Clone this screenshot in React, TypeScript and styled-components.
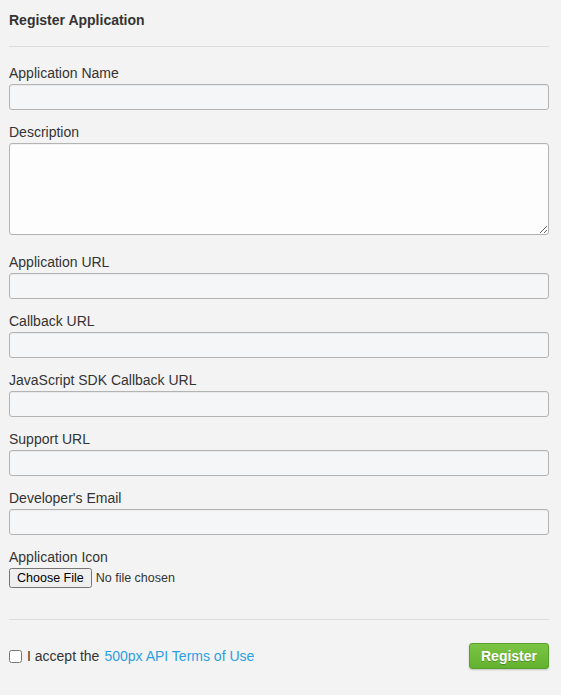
import styled, { createGlobalStyle } from 'styled-components';

const GlobalStyle = createGlobalStyle`
    html, body {
        margin: 0;
        padding: 0;
        background: #f3f3f3;
    }
    body {
        font-family: "Liberation Sans", Arial, sans-serif;
        color: #333333;
    }
`

const fields = [
    'Application URL',
    'Callback URL',
    'JavaScript SDK Callback URL',
    'Support URL',
    "Developer's Email",
]

export default function App() {
    return (
        <Page>
            <GlobalStyle />
            <Title>Register Application</Title>
            <Divider />
            <Form onSubmit={e => e.preventDefault()}>
                <Field>
                    <Label>Application Name</Label>
                    <Input />
                </Field>
                <Field $gap={18}>
                    <Label>Description</Label>
                    <TextArea />
                </Field>
                {fields.map(name => (
                    <Field key={name}>
                        <Label>{name}</Label>
                        <Input />
                    </Field>
                ))}
                <Field>
                    <Label>Application Icon</Label>
                    <FileInput type="file" />
                </Field>
                <Divider />
                <Footer>
                    <Accept>
                        <Check type="checkbox" />
                        I accept the <TermsLink href="#">500px API Terms of Use</TermsLink>
                    </Accept>
                    <RegisterBtn type="submit">Register</RegisterBtn>
                </Footer>
            </Form>
        </Page>
    )
}

const Page = styled.div`
    width: 540px;
    padding: 11px 9px 20px;
`
const Title = styled.h3`
    margin: 0;
    font-size: 14px;
    line-height: 18px;
    font-weight: bold;
    color: #333333;
`
const Divider = styled.hr`
    border: 0;
    border-top: 1px solid #dcdcdc;
    margin: 17px 0 0;
    height: 0;
`
const Form = styled.form`
    display: flex;
    flex-direction: column;
    padding-top: 17px;
`
const Field = styled.div<{ $gap?: number }>`
    display: flex;
    flex-direction: column;
    align-items: flex-start;
    margin-bottom: ${p => p.$gap ?? 13}px;
`
const Label = styled.label`
    font-size: 14px;
    line-height: 18px;
    margin-bottom: 2px;
    color: #333333;
`
const Input = styled.input`
    box-sizing: border-box;
    width: 540px;
    height: 26px;
    margin: 0;
    background: #f5f6f8;
    border: 1px solid #b3b3b3;
    border-radius: 3px;
    box-shadow: inset 0 1px 1px rgba(0, 0, 0, 0.05);
    outline: none;
`
const TextArea = styled.textarea`
    box-sizing: border-box;
    width: 540px;
    height: 92px;
    margin: 0;
    background: #fdfdfd;
    border: 1px solid #b3b3b3;
    border-radius: 3px;
    box-shadow: inset 0 1px 1px rgba(0, 0, 0, 0.05);
    outline: none;
    resize: vertical;
`
const FileInput = styled.input`
    margin: 0;
    font-family: "Liberation Sans", Arial, sans-serif;
    font-size: 12.5px;
    color: #333333;
    height: 21px;
`
const Footer = styled.div`
    display: flex;
    justify-content: space-between;
    align-items: center;
    margin-top: 23px;
`
const Accept = styled.label`
    display: flex;
    align-items: center;
    font-size: 14px;
    color: #333333;
    gap: 4px;
`
const Check = styled.input`
    margin: 0 1px 0 0;
    width: 13px;
    height: 13px;
`
const TermsLink = styled.a`
    color: #2b9fe4;
    text-decoration: none;
    margin-left: 1px;
`
const RegisterBtn = styled.button`
    width: 80px;
    height: 26px;
    padding: 0;
    font-family: "Liberation Sans", Arial, sans-serif;
    font-size: 14px;
    font-weight: bold;
    color: #ffffff;
    text-shadow: 0 1px 0 rgba(0, 0, 0, 0.25);
    background: linear-gradient(#7cc445, #62b22f);
    border: 1px solid #57a02a;
    border-radius: 3px;
    box-shadow: 0 1px 2px rgba(0, 0, 0, 0.2);
    cursor: pointer;
`
